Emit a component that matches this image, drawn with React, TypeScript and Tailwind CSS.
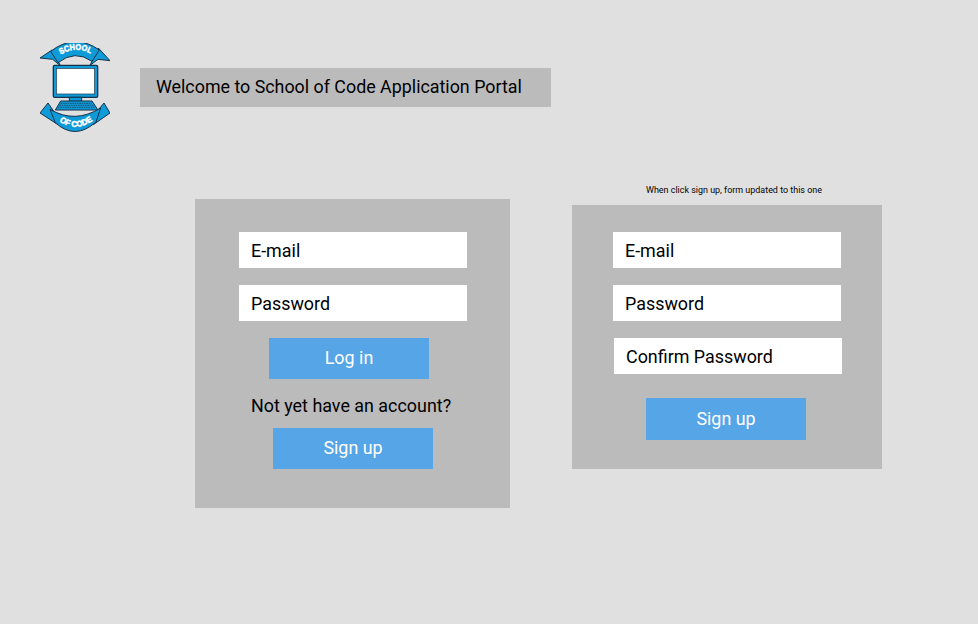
const fontRoboto = "font-['Roboto','Liberation_Sans',sans-serif]";

const Logo = () => (
  <svg width="70" height="90" viewBox="30 25 210 270" className="shrink-0">
    {/* top ribbon tails */}
    <path d="M30 70 L66 46 L92 94 L68 74 Z" fill="#0f9ad8" stroke="#16324a" strokeWidth="3" strokeLinejoin="round" />
    <path d="M240 78 L205 40 L180 92 L204 74 Z" fill="#0f9ad8" stroke="#16324a" strokeWidth="3" strokeLinejoin="round" />
    {/* top ribbon */}
    <path d="M62 50 Q135 -6 208 46 L186 80 Q135 44 84 84 Z" fill="#0f9ad8" stroke="#16324a" strokeWidth="3" strokeLinejoin="round" />
    <path id="logo-top" d="M82 67 Q135 26 192 63" fill="none" />
    <text fill="#fff" stroke="#fff" strokeWidth="1.5" fontSize="25" fontWeight="700" fontFamily="'Liberation Sans', sans-serif">
      <textPath href="#logo-top" startOffset="50%" textAnchor="middle" textLength="94" lengthAdjust="spacingAndGlyphs">SCHOOL</textPath>
    </text>
    {/* monitor */}
    <rect x="70" y="92" width="133" height="96" rx="4" fill="#0f9ad8" stroke="#16324a" strokeWidth="4" />
    <rect x="79" y="101" width="115" height="77" fill="#fff" stroke="#16324a" strokeWidth="2" />
    <path d="M118 188 H155 V200 H118 Z" fill="#0f9ad8" stroke="#16324a" strokeWidth="3" />
    {/* keyboard */}
    <path d="M76 226 L92 199 H186 L204 226 Z" fill="#0f9ad8" stroke="#16324a" strokeWidth="3" strokeLinejoin="round" />
    <path d="M92 206 H186 M88 212 H190 M84 218 H194" stroke="#16324a" strokeWidth="2" strokeDasharray="5 2" />
    {/* bottom ribbon tails */}
    <path d="M30 235 L54 205 L84 248 L84 270 Z" fill="#0f9ad8" stroke="#16324a" strokeWidth="3" strokeLinejoin="round" />
    <path d="M240 235 L222 205 L186 248 L190 270 Z" fill="#0f9ad8" stroke="#16324a" strokeWidth="3" strokeLinejoin="round" />
    {/* bottom ribbon */}
    <path d="M60 224 Q135 268 212 220 L198 262 Q135 318 76 264 Z" fill="#0f9ad8" stroke="#16324a" strokeWidth="3" strokeLinejoin="round" />
    <path id="logo-bottom" d="M82 256 Q135 298 194 254" fill="none" />
    <text fill="#fff" stroke="#fff" strokeWidth="1.5" fontSize="25" fontWeight="700" fontFamily="'Liberation Sans', sans-serif">
      <textPath href="#logo-bottom" startOffset="50%" textAnchor="middle" textLength="108" lengthAdjust="spacingAndGlyphs">OF CODE</textPath>
    </text>
  </svg>
);

const Field = ({ label, className = "" }: { label: string; className?: string }) => (
  <div className={`flex h-9 w-[228px] items-center bg-white pl-3 pt-0.5 text-[17.9px] text-black ${className}`}>{label}</div>
);

const BlueButton = ({ label, className = "" }: { label: string; className?: string }) => (
  <button className={`h-[41px] w-40 bg-[#56a5e6] text-[17.9px] text-white ${className}`}>{label}</button>
);

const App = () => {
  return (
    <div className={`h-[624px] w-[978px] overflow-hidden bg-[#e0e0e0] ${fontRoboto}`}>
      {/* 상단 로고 + 타이틀 */}
      <div className="flex items-start pl-10 pt-[43px]">
        <Logo />
        <div className="ml-[30px] mt-[25px] flex h-[39px] w-[411px] items-center bg-[#bbbbbb] pl-4 text-[17.85px] text-black">
          Welcome to School of Code Application Portal
        </div>
      </div>

      <div className="mt-[50px] flex items-start pl-[195px]">
        {/* 로그인 폼 */}
        <div className="mt-[16px] flex h-[309px] w-[315px] flex-col bg-[#bbbbbb] pl-11 pt-[33px]">
          <Field label="E-mail" />
          <Field label="Password" className="mt-[17px]" />
          <BlueButton label="Log in" className="ml-[30px] mt-[17px]" />
          <p className="ml-3 mt-[15px] text-[17.9px] leading-[24px] text-black">Not yet have an account?</p>
          <BlueButton label="Sign up" className="ml-[34px] mt-[10px]" />
        </div>

        {/* 회원가입 폼 */}
        <div className="ml-[62px] flex flex-col">
          <p className="h-[22px] pl-[74px] text-[8.95px] leading-[14px] text-black">When click sign up, form updated to this one</p>
          <div className="flex h-[264px] w-[310px] flex-col bg-[#bbbbbb] pl-[41px] pt-[27px]">
            <Field label="E-mail" />
            <Field label="Password" className="mt-[17px]" />
            <Field label="Confirm Password" className="ml-px mt-[17px]" />
            <BlueButton label="Sign up" className="ml-[33px] mt-[24px] h-[42px]" />
          </div>
        </div>
      </div>
    </div>
  );
};

export default App;
